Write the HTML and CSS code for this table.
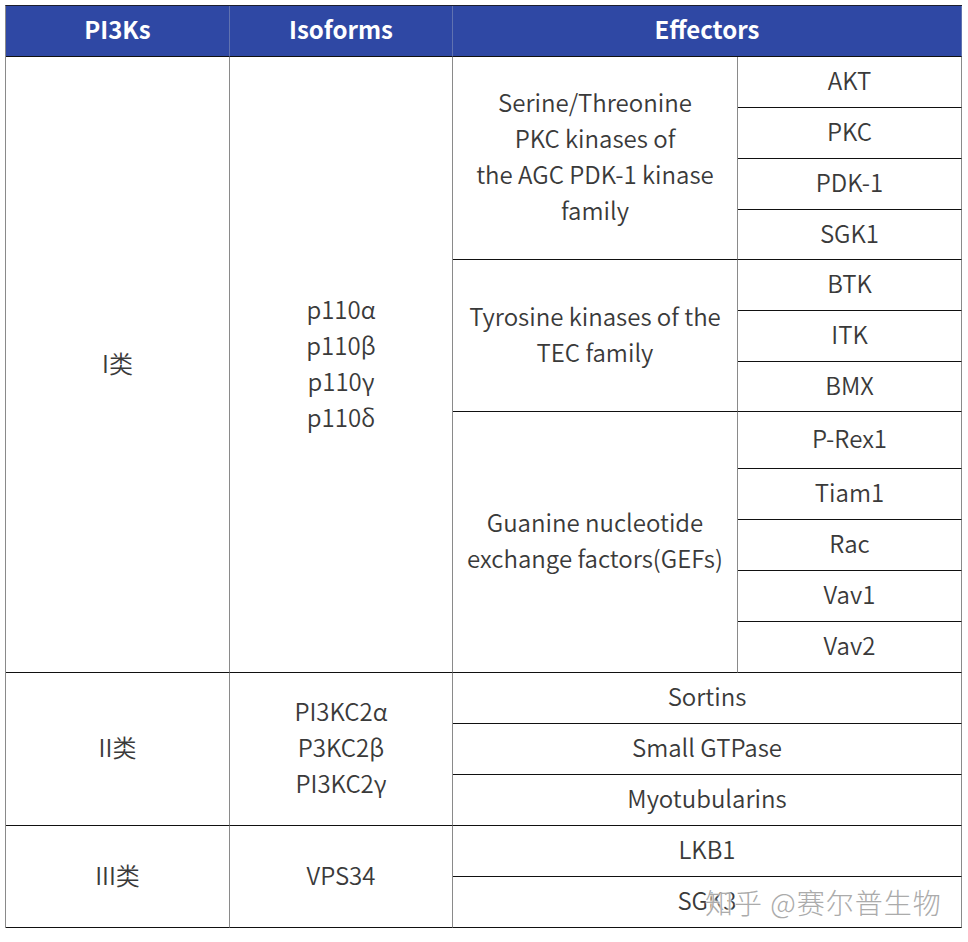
FILE: index.html
```html
<!DOCTYPE html>
<html lang="zh">
<head>
<meta charset="utf-8">
<link rel="stylesheet" href="styles.css">
</head>
<body>
<div class="sheet">
  <div class="table">
    <div class="cell head">PI3Ks</div>
    <div class="cell head">Isoforms</div>
    <div class="cell head wide">Effectors</div>

    <div class="cell rows12">I类</div>
    <div class="cell rows12">p110α<br>p110β<br>p110γ<br>p110δ</div>
    <div class="cell rows4">Serine/Threonine<br>PKC kinases of<br>the AGC PDK-1 kinase<br>family</div>
    <div class="cell">AKT</div>
    <div class="cell">PKC</div>
    <div class="cell">PDK-1</div>
    <div class="cell">SGK1</div>
    <div class="cell rows3">Tyrosine kinases of the<br>TEC family</div>
    <div class="cell">BTK</div>
    <div class="cell">ITK</div>
    <div class="cell">BMX</div>
    <div class="cell rows5">Guanine nucleotide<br>exchange factors(GEFs)</div>
    <div class="cell">P-Rex1</div>
    <div class="cell">Tiam1</div>
    <div class="cell">Rac</div>
    <div class="cell">Vav1</div>
    <div class="cell">Vav2</div>

    <div class="cell rows3">II类</div>
    <div class="cell rows3">PI3KC2α<br>P3KC2β<br>PI3KC2γ</div>
    <div class="cell wide">Sortins</div>
    <div class="cell wide">Small GTPase</div>
    <div class="cell wide">Myotubularins</div>

    <div class="cell rows2">III类</div>
    <div class="cell rows2">VPS34</div>
    <div class="cell wide">LKB1</div>
    <div class="cell wide">SGK3</div>
  </div>
  <div class="watermark">知乎 @赛尔普生物</div>
</div>
</body>
</html>
```
FILE: styles.css
```css
html, body {
  margin: 0;
  padding: 0;
  background: #ffffff;
}
body {
  font-family: "Noto Sans CJK SC", "Noto Sans", sans-serif;
  color: #3a3a3a;
}
.sheet {
  position: relative;
  width: 968px;
  height: 942px;
  padding: 5px 0 0 5px;
  box-sizing: border-box;
}
.table {
  display: grid;
  width: 957px;
  box-sizing: border-box;
  grid-template-columns: 224px 223px 285px 224px;
  grid-template-rows: 51px 51px 51px 51px 50px 51px 51px 50px 57px 51px 51px 51px 51px 51px 51px 51px 51px 51px;
  border-left: 1px solid #8a8a8a;
  border-top: 1px solid #1d1f2e;
}
.cell {
  box-sizing: border-box;
  border-right: 1px solid #8a8a8a;
  border-bottom: 1px solid #111111;
  display: flex;
  align-items: center;
  justify-content: center;
  text-align: center;
  font-size: 24px;
  font-weight: 350;
  line-height: 36px;
  padding-bottom: 4px;
}
.head {
  background: #2f48a4;
  color: #ffffff;
  font-weight: 700;
  border-right-color: #6072b0;
  border-bottom-color: #111111;
}
.wide { grid-column: span 2; }
.rows2 { grid-row: span 2; }
.rows3 { grid-row: span 3; }
.rows4 { grid-row: span 4; }
.rows5 { grid-row: span 5; }
.rows12 { grid-row: span 12; }
.watermark {
  position: absolute;
  left: 705px;
  top: 882px;
  font-size: 28px;
  font-weight: 300;
  line-height: 40px;
  color: #ababab;
  letter-spacing: 1px;
  text-shadow: 0 0 2px #ffffff, 0 0 2px #ffffff, 0 0 3px #ffffff;
}
```
